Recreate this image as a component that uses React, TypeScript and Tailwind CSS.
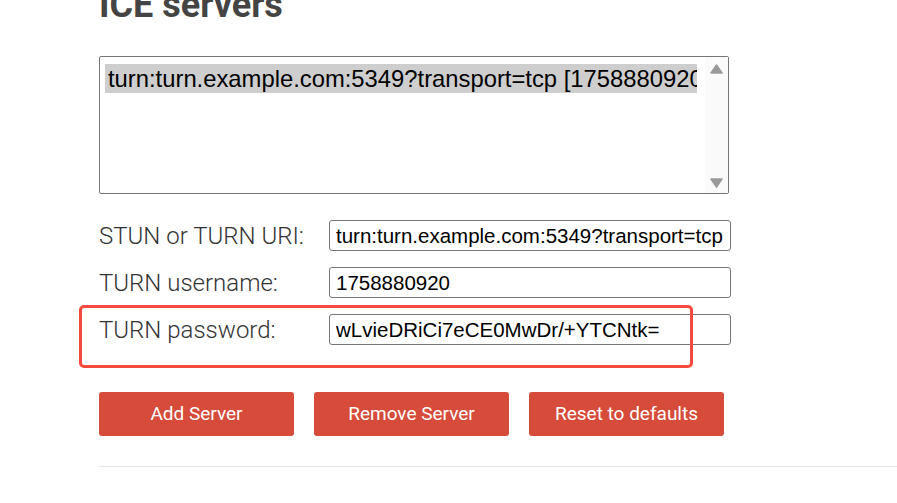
import { ChangeEvent, useState } from 'react';

const fields = [
  { id: 'uri', label: 'STUN or TURN URI:', value: 'turn:turn.example.com:5349?transport=tcp' },
  { id: 'user', label: 'TURN username:', value: '1758880920' },
  { id: 'pass', label: 'TURN password:', value: 'wLvieDRiCi7eCE0MwDr/+YTCNtk=' },
];

function Field({ label, value, onChange }: { label: string; value: string; onChange: (v: string) => void }) {
  return (
    <div className="flex items-center h-[31px]">
      <label className="w-[230px] whitespace-nowrap text-[24px] text-[#333] font-['Roboto',sans-serif] font-light">{label}</label>
      <input
        value={value}
        onChange={(e: ChangeEvent<HTMLInputElement>) => onChange(e.target.value)}
        className="w-[402px] h-[31px] px-[6px] border border-[#767676] rounded-[3px] text-[20.5px] text-black font-['Liberation_Sans',Arial,sans-serif] outline-none"
      />
    </div>
  );
}

export default function App() {
  const [values, setValues] = useState<Record<string, string>>(
    Object.fromEntries(fields.map((f) => [f.id, f.value]))
  );

  return (
    <div className="w-[897px] h-[503px] overflow-hidden bg-white font-['Roboto',sans-serif]">
      <div className="pl-[99px] -mt-[13px]">
        <h2 className="text-[36px] leading-[36px] font-bold text-[#444]">ICE servers</h2>

        {/* server list box */}
        <div className="mt-[33px] w-[630px] h-[138px] border border-[#767676] rounded-[2px] flex">
          <div className="w-[592px] ml-[5px] pt-[7px] overflow-hidden">
            <div className="h-[29px] bg-[#cecece] flex items-center pl-[3px] whitespace-nowrap overflow-hidden text-[23.8px] text-black font-['Liberation_Sans',Arial,sans-serif]">
              turn:turn.example.com:5349?transport=tcp [1758880920:wLvieDRiCi7eCE0MwDr/+YTCNtk=]
            </div>
          </div>
          <div className="ml-auto w-[23px] bg-[#fafafa] flex flex-col items-center justify-between pt-[7px] pb-[5px]">
            <svg width="13" height="10" viewBox="0 0 13 10"><path d="M6.5 1 L12 9 L1 9 Z" fill="#9a9a9a" stroke="#9a9a9a" strokeWidth="1.5" strokeLinejoin="round" /></svg>
            <svg width="13" height="10" viewBox="0 0 13 10"><path d="M1 1 L12 1 L6.5 9 Z" fill="#9a9a9a" stroke="#9a9a9a" strokeWidth="1.5" strokeLinejoin="round" /></svg>
          </div>
        </div>

        {/* fields */}
        <div className="relative mt-[26px] flex flex-col gap-[16px]">
          {fields.map((f) => (
            <Field
              key={f.id}
              label={f.label}
              value={values[f.id]}
              onChange={(v) => setValues({ ...values, [f.id]: v })}
            />
          ))}
          {/* highlight annotation */}
          <div className="absolute left-[-20px] top-[85px] w-[614px] h-[63px] border-[3px] border-[#f4493f] rounded-[5px] pointer-events-none" />
        </div>

        {/* buttons */}
        <div className="mt-[47px] flex gap-[20px]">
          {['Add Server', 'Remove Server', 'Reset to defaults'].map((b) => (
            <button
              key={b}
              className="w-[195px] h-[44px] rounded-[3px] bg-[#d64b3a] text-white text-[19px] font-['Roboto',sans-serif]"
            >
              {b}
            </button>
          ))}
        </div>

        <div className="mt-[30px] h-px bg-[#e8e8e8]" />
      </div>
    </div>
  );
}
